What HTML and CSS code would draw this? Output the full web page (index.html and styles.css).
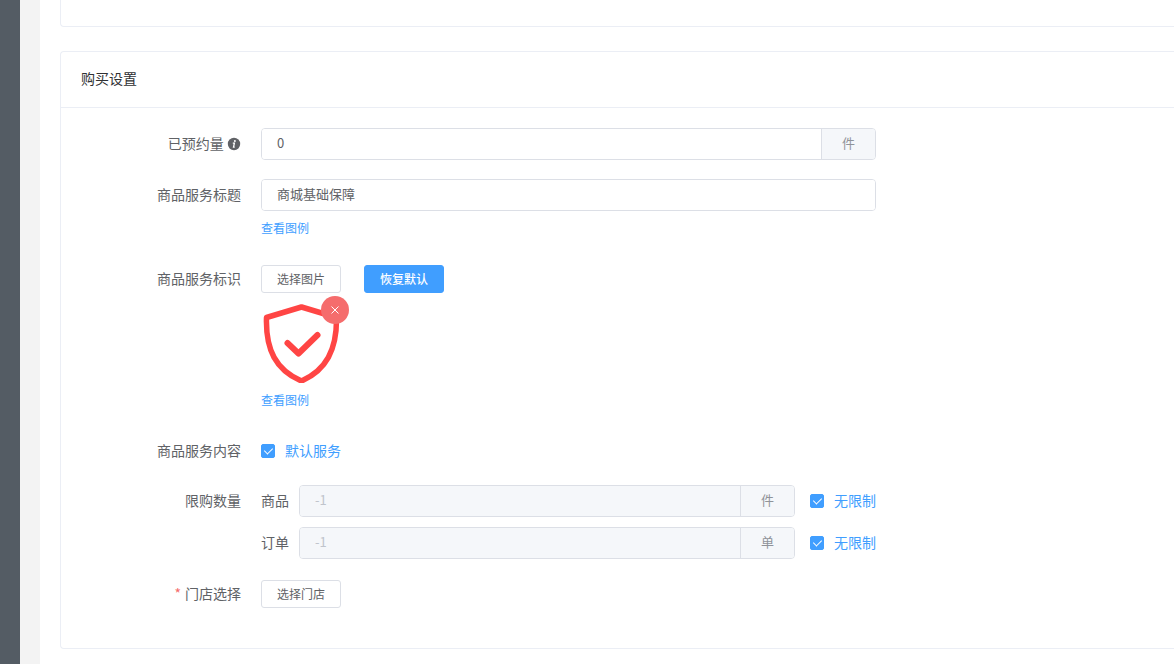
FILE: index.html
```html
<!DOCTYPE html>
<html lang="zh-CN">
<head>
    <meta charset="UTF-8">
    <meta name="viewport" content="width=device-width, initial-scale=1.0">
    <title>购买设置</title>
    <link rel="stylesheet" href="styles.css">
</head>
<body>

<div class="layout">
    <aside class="sidebar"></aside>

    <main class="content">
        <section class="card card-prev"></section>

        <section class="card">
            <h2 class="card-header">购买设置</h2>

            <form class="card-body">
                <!-- Booked amount -->
                <div class="form-item with-append">
                    <label class="form-label" for="booked">已预约量
                        <svg class="icon-info" viewBox="0 0 14 14" aria-hidden="true">
                            <circle cx="7" cy="7" r="6.2" fill="#606266"/>
                            <circle cx="7.9" cy="3.9" r="1" fill="#fff"/>
                            <path d="M5.8 6.2h1.6l-.9 4h1.2" fill="none" stroke="#fff" stroke-width="1.3"/>
                        </svg>
                    </label>
                    <div class="form-content">
                        <div class="input-group">
                            <input type="text" id="booked" name="booked" value="0">
                            <span class="append">件</span>
                        </div>
                    </div>
                </div>

                <!-- Service title -->
                <div class="form-item">
                    <label class="form-label" for="service_title">商品服务标题</label>
                    <div class="form-content">
                        <div class="input-group">
                            <input type="text" id="service_title" name="service_title" value="商城基础保障">
                        </div>
                        <a class="example-link" href="#">查看图例</a>
                    </div>
                </div>

                <!-- Service logo -->
                <div class="form-item">
                    <span class="form-label">商品服务标识</span>
                    <div class="form-content">
                        <div class="button-row">
                            <button type="button" class="btn">选择图片</button>
                            <button type="button" class="btn btn-primary">恢复默认</button>
                        </div>
                        <div class="preview">
                            <svg class="shield" viewBox="0 0 80 80" fill="none" stroke="#ff4544" stroke-linecap="round" stroke-linejoin="round" role="img" aria-label="商品服务标识">
                                <path d="M40.500 4L5.500 14.500C4.500 47 15 67 40.500 78C65 67 76 47 75.500 14.500Z" stroke-width="5.500"/>
                                <path d="M26.500 40L37.500 50.500L56.500 32" stroke-width="6"/>
                            </svg>
                            <button type="button" class="btn-remove" aria-label="删除">
                                <svg viewBox="0 0 10 10" width="10" height="10" stroke="#fff" fill="none">
                                    <path d="M1.500 1.500L8.500 8.500M8.500 1.500L1.500 8.500"/>
                                </svg>
                            </button>
                        </div>
                        <a class="example-link" href="#">查看图例</a>
                    </div>
                </div>

                <!-- Service content -->
                <div class="form-item">
                    <span class="form-label">商品服务内容</span>
                    <div class="form-content">
                        <label class="check"><input type="checkbox" name="default_service" checked>默认服务</label>
                    </div>
                </div>

                <!-- Purchase limits -->
                <div class="form-item with-append">
                    <span class="form-label">限购数量</span>
                    <div class="form-content limits">
                        <div class="limit-row">
                            <label for="limit_goods">商品</label>
                            <div class="input-group">
                                <input type="text" id="limit_goods" name="limit_goods" value="-1" disabled>
                                <span class="append">件</span>
                            </div>
                            <label class="check"><input type="checkbox" name="goods_unlimited" checked>无限制</label>
                        </div>
                        <div class="limit-row">
                            <label for="limit_order">订单</label>
                            <div class="input-group">
                                <input type="text" id="limit_order" name="limit_order" value="-1" disabled>
                                <span class="append">单</span>
                            </div>
                            <label class="check"><input type="checkbox" name="order_unlimited" checked>无限制</label>
                        </div>
                    </div>
                </div>

                <!-- Store -->
                <div class="form-item">
                    <span class="form-label required">门店选择</span>
                    <div class="form-content">
                        <div class="button-row">
                            <button type="button" class="btn">选择门店</button>
                        </div>
                    </div>
                </div>
            </form>
        </section>
    </main>
</div>

</body>
</html>
```

FILE: styles.css
```css
* {
    box-sizing: border-box;
}
body {
    margin: 0;
    background-color: #f3f3f3;
    color: #606266;
    font-family: "Noto Sans CJK SC", sans-serif;
    font-size: 14px;
}
input, button {
    font-family: inherit;
}
.layout {
    display: flex;
    gap: 20px;
    min-height: 100vh;
}
.sidebar {
    flex: 0 0 20px;
    background-color: #545c64;
}
.content {
    flex: 1;
    min-width: 0;
    padding: 0 0 16px 20px;
    background-color: #fff;
}
.card {
    border: 1px solid #ebeef5;
    border-right: none;
    border-radius: 4px 0 0 4px;
}
.card-prev {
    height: 27px;
    margin-bottom: 24px;
    border-top: none;
    border-top-left-radius: 0;
}
.card-header {
    margin: 0;
    padding: 17px 20px 19px;
    border-bottom: 1px solid #ebeef5;
    color: #303133;
    font-size: 14px;
    font-weight: 400;
    line-height: 19px;
}
.card-body {
    padding: 20px;
}
.form-item {
    display: flex;
    margin-bottom: 18px;
    line-height: 30px;
}
.with-append {
    padding-bottom: 1px;
}
.form-label {
    flex: 0 0 180px;
    padding-right: 20px;
    text-align: right;
}
.required::before {
    content: "*";
    margin-right: 4px;
    color: #f56c6c;
}
.icon-info {
    width: 14px;
    height: 14px;
    vertical-align: -2px;
}
.form-content {
    flex: 0 1 615px;
    min-width: 0;
}
.input-group {
    display: flex;
    flex: 1;
    height: 32px;
    border: 1px solid #dcdfe6;
    border-radius: 4px;
    overflow: hidden;
}
.input-group input {
    flex: 1;
    min-width: 0;
    padding: 0 15px 3px;
    border: none;
    outline: none;
    background-color: #fff;
    color: #606266;
    font-size: 13px;
}
.input-group input:disabled {
    background-color: #f5f7fa;
    color: #c0c4cc;
}
.append {
    flex: 0 0 54px;
    border-left: 1px solid #dcdfe6;
    background-color: #f5f7fa;
    color: #909399;
    font-size: 13px;
    line-height: 28px;
    text-align: center;
}
.example-link {
    display: block;
    width: max-content;
    color: #409eff;
    font-size: 12px;
    line-height: 34px;
    text-decoration: none;
}
.button-row {
    display: flex;
    align-items: center;
    gap: 23px;
    height: 32px;
}
.btn {
    width: 80px;
    height: 28px;
    padding: 0 0 2px;
    border: 1px solid #dcdfe6;
    border-radius: 3px;
    background-color: #fff;
    color: #606266;
    font-size: 12px;
    cursor: pointer;
}
.btn-primary {
    border-color: #409eff;
    background-color: #409eff;
    color: #fff;
    font-weight: 500;
}
.preview {
    position: relative;
    width: 80px;
    height: 80px;
    margin-top: 8px;
}
.shield {
    display: block;
    width: 80px;
    height: 80px;
}
.btn-remove {
    position: absolute;
    top: -7px;
    right: -8px;
    display: flex;
    align-items: center;
    justify-content: center;
    width: 28px;
    height: 28px;
    padding: 0;
    border: none;
    border-radius: 50%;
    background-color: #f56c6c;
    cursor: pointer;
}
.check {
    display: flex;
    gap: 10px;
    width: max-content;
    height: 32px;
    color: #409eff;
    cursor: pointer;
}
.check input {
    appearance: none;
    position: relative;
    width: 14px;
    height: 14px;
    margin: 9px 0 0;
    border: 1px solid #dcdfe6;
    border-radius: 2px;
}
.check input:checked {
    border-color: #409eff;
    background-color: #409eff;
}
.check input:checked::after {
    content: "";
    position: absolute;
    top: 1px;
    left: 4px;
    width: 4px;
    height: 7px;
    border: 1px solid #fff;
    border-top: none;
    border-left: none;
    transform: rotate(45deg);
}
.limits {
    display: grid;
    gap: 10px;
}
.limit-row {
    display: flex;
    height: 32px;
}
.limit-row .input-group {
    margin: 0 15px 0 10px;
}
```
